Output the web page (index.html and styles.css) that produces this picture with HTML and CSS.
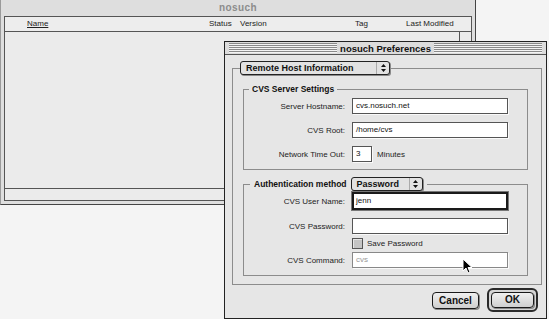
FILE: index.html
```html
<!doctype html>
<html lang="en">
<head>
	<meta charset="utf-8">
	<title>nosuch Preferences</title>
	<link rel="stylesheet" href="styles.css">
</head>
<body>
	<!--background document window-->
	<div class="doc-win">
		<div class="doc-title">nosuch</div>
		<div class="doc-body">
			<div class="doc-head">
				<span class="col-name">Name</span>
				<span>Status</span>
				<span>Version</span>
				<span>Tag</span>
				<span>Last Modified</span>
			</div>
			<div class="doc-main">
				<div class="doc-list"></div>
				<div class="vscroll"></div>
			</div>
			<div class="hscroll"></div>
		</div>
	</div>

	<!--preferences dialog-->
	<div class="pref-win">
		<div class="pref-title">
			<div class="stripes"></div>
			<span>nosuch Preferences</span>
			<div class="stripes"></div>
		</div>
		<div class="pref-body">
			<fieldset class="group">
				<legend class="popup-legend">
					<div class="popup popup-wide">
						<span class="popup-text">Remote Host Information</span>
						<span class="popup-arrows">
							<svg width="5" height="8" viewBox="0 0 5 8"><path d="M2.5 0 L5 3 L0 3 Z M0 5 L5 5 L2.5 8 Z" fill="#111"/></svg>
						</span>
					</div>
				</legend>
				<div class="group-body outer-body">
					<fieldset class="group">
						<legend class="group-label">CVS Server Settings</legend>
						<div class="group-body server-body">
							<div class="row">
								<label>Server Hostname:</label>
								<div class="field">cvs.nosuch.net</div>
							</div>
							<div class="row">
								<label>CVS Root:</label>
								<div class="field">/home/cvs</div>
							</div>
							<div class="row">
								<label>Network Time Out:</label>
								<div class="field field-small">3</div>
								<span class="unit">Minutes</span>
							</div>
						</div>
					</fieldset>

					<fieldset class="group auth-group">
						<legend class="group-label auth-label">
							<span>Authentication method</span>
							<div class="popup popup-small">
								<span class="popup-text">Password</span>
								<span class="popup-arrows">
									<svg width="5" height="8" viewBox="0 0 5 8"><path d="M2.5 0 L5 3 L0 3 Z M0 5 L5 5 L2.5 8 Z" fill="#111"/></svg>
								</span>
							</div>
						</legend>
						<div class="group-body auth-body">
							<div class="row row-focus">
								<label>CVS User Name:</label>
								<div class="field field-focus">jenn</div>
							</div>
							<div class="row row-pass">
								<label>CVS Password:</label>
								<div class="field"></div>
							</div>
							<div class="row row-check">
								<label></label>
								<span class="checkbox"></span>
								<span class="check-text">Save Password</span>
							</div>
							<div class="row row-cmd">
								<label>CVS Command:</label>
								<div class="field field-off">cvs</div>
							</div>
						</div>
					</fieldset>
				</div>
			</fieldset>

			<div class="buttons">
				<div class="btn">Cancel</div>
				<div class="btn-ring"><div class="btn btn-ok">OK</div></div>
			</div>
		</div>
	</div>

	<svg class="cursor" width="11" height="17" viewBox="0 0 11 17">
		<path d="M1 1 L1 13 L4 10 L6 15 L8 14 L6 9.5 L10 9.5 Z" fill="#000" stroke="#fff" stroke-width="1"/>
	</svg>
</body>
</html>
```

FILE: styles.css
```css
body {
	margin: 0;
	background-color: #f4f4f4;
	font-family: "Liberation Sans", Arial, sans-serif;
	font-size: 8px;
	color: #1a1a1a;
}

/*окно документа на заднем плане*/
.doc-win {
	position: absolute;
	left: 0;
	top: 0;
	width: 476px;
	height: 205px;
	box-sizing: border-box;
	background-color: #dedede;
	border-left: 1px solid #9a9a9a;
	border-right: 1px solid #444;
	border-bottom: 1px solid #444;
	padding: 0 3px 3px;
	display: flex;
	flex-direction: column;
}

.doc-title {
	height: 16px;
	line-height: 16px;
	text-align: center;
	font-weight: bold;
	font-size: 10px;
	color: #8c8c8c;
	letter-spacing: 0.4px;
}

.doc-body {
	flex: 1;
	border: 1px solid #555;
	background-color: #ebebeb;
	display: flex;
	flex-direction: column;
}

.doc-head {
	height: 14px;
	line-height: 14px;
	border-bottom: 1px solid #555;
	background-color: #ededed;
	display: grid;
	grid-template-columns: 182px 31px 115px 51px 1fr;
	padding-left: 22px;
	color: #222;
}

.col-name {
	text-decoration: underline;
}

.doc-main {
	flex: 1;
	display: flex;
}

.doc-list {
	flex: 1;
}

.vscroll {
	width: 11px;
	border-left: 1px solid #555;
}

.hscroll {
	height: 11px;
	border-top: 1px solid #555;
}

/*окно настроек*/
.pref-win {
	position: absolute;
	left: 224px;
	top: 41px;
	width: 323px;
	height: 278px;
	box-sizing: border-box;
	border: 1px solid #222;
	background-color: #e6e6e6;
	display: flex;
	flex-direction: column;
}

.pref-title {
	height: 15px;
	border-bottom: 1px solid #555;
	background-color: #dcdcdc;
	display: flex;
	align-items: center;
	padding: 0 4px;
}

.stripes {
	flex: 1;
	height: 10px;
	background: repeating-linear-gradient(to bottom, #8a8a8a 0 1px, #f4f4f4 1px 2px);
}

.pref-title span {
	padding: 0 3px;
	font-weight: bold;
	font-size: 9.5px;
	color: #111;
}

.pref-body {
	padding: 6px 4px 6px 7px;
}

.group {
	margin: 0;
	padding: 0;
	min-width: 0;
	border: 1px solid #8c8c8c;
}

.group-body {
	display: flex;
	flex-direction: column;
}

.outer-body {
	padding: 8px 13px 8px 10px;
}

.popup-legend {
	margin-left: 7px;
	padding: 0;
}

.popup {
	height: 14px;
	box-sizing: border-box;
	border: 1px solid #222;
	border-radius: 3px;
	background-color: #e2e2e2;
	box-shadow: 1px 1px 0 #8a8a8a;
	display: flex;
	align-items: center;
	font-weight: bold;
	font-size: 9px;
	color: #111;
}

.popup-wide {
	width: 150px;
}

.popup-small {
	width: 72px;
}

.popup-text {
	flex: 1;
	padding-left: 5px;
	white-space: nowrap;
}

.popup-arrows {
	width: 12px;
	height: 12px;
	border-left: 1px solid #aaa;
	display: flex;
	align-items: center;
	justify-content: center;
}

.group-label {
	margin-left: 5px;
	padding: 0 3px;
	line-height: 12px;
	font-weight: bold;
	font-size: 8.5px;
	color: #111;
}

.server-body {
	padding: 3px 0 7px;
	gap: 8px;
}

.auth-group {
	margin-top: 7px;
}

.auth-label {
	display: flex;
	align-items: center;
	gap: 4px;
	margin-left: 6px;
	padding: 0 4px;
}

.auth-body {
	padding: 1px 0 7px;
}

.row {
	display: flex;
	align-items: center;
	height: 16px;
}

.row label {
	width: 101px;
	margin-right: 7px;
	text-align: right;
	color: #222;
}

.field {
	width: 156px;
	height: 16px;
	box-sizing: border-box;
	border: 1px solid #555;
	background-color: #fff;
	box-shadow: 1px 1px 0 #fafafa;
	padding-left: 3px;
	line-height: 14px;
	color: #111;
}

.field-small {
	width: 20px;
}

.unit {
	margin-left: 5px;
	color: #222;
}

.row-focus {
	height: 18px;
}

.field-focus {
	height: 18px;
	border: 2px solid #1a1a1a;
	box-shadow: 0 0 0 1px #777;
	line-height: 14px;
	padding-left: 2px;
}

.row-pass {
	margin-top: 8px;
}

.row-check {
	margin-top: 3px;
	height: 12px;
}

.checkbox {
	width: 11px;
	height: 11px;
	box-sizing: border-box;
	border: 1px solid #555;
	background-color: #c4c4c4;
	box-shadow: inset 1px 1px 0 #e6e6e6;
}

.check-text {
	margin-left: 4px;
	color: #222;
}

.row-cmd {
	margin-top: 3px;
}

.field-off {
	border-color: #888;
	color: #999;
}

.buttons {
	display: flex;
	justify-content: flex-end;
	align-items: center;
	gap: 8px;
	margin-top: 3px;
	margin-right: 4px;
}

.btn {
	width: 47px;
	height: 17px;
	box-sizing: border-box;
	border: 1px solid #1a1a1a;
	border-radius: 4px;
	background: linear-gradient(#f0f0f0, #cfcfcf);
	box-shadow: 1px 1px 0 #888;
	text-align: center;
	line-height: 15px;
	font-weight: bold;
	font-size: 10px;
	color: #111;
}

.btn-ring {
	padding: 2px;
	border: 2px solid #2a2a2a;
	border-radius: 6px;
	background-color: #d6d6d6;
}

.btn-ok {
	width: 43px;
	height: 16px;
	line-height: 14px;
}

.cursor {
	position: absolute;
	left: 462px;
	top: 258px;
}
```
